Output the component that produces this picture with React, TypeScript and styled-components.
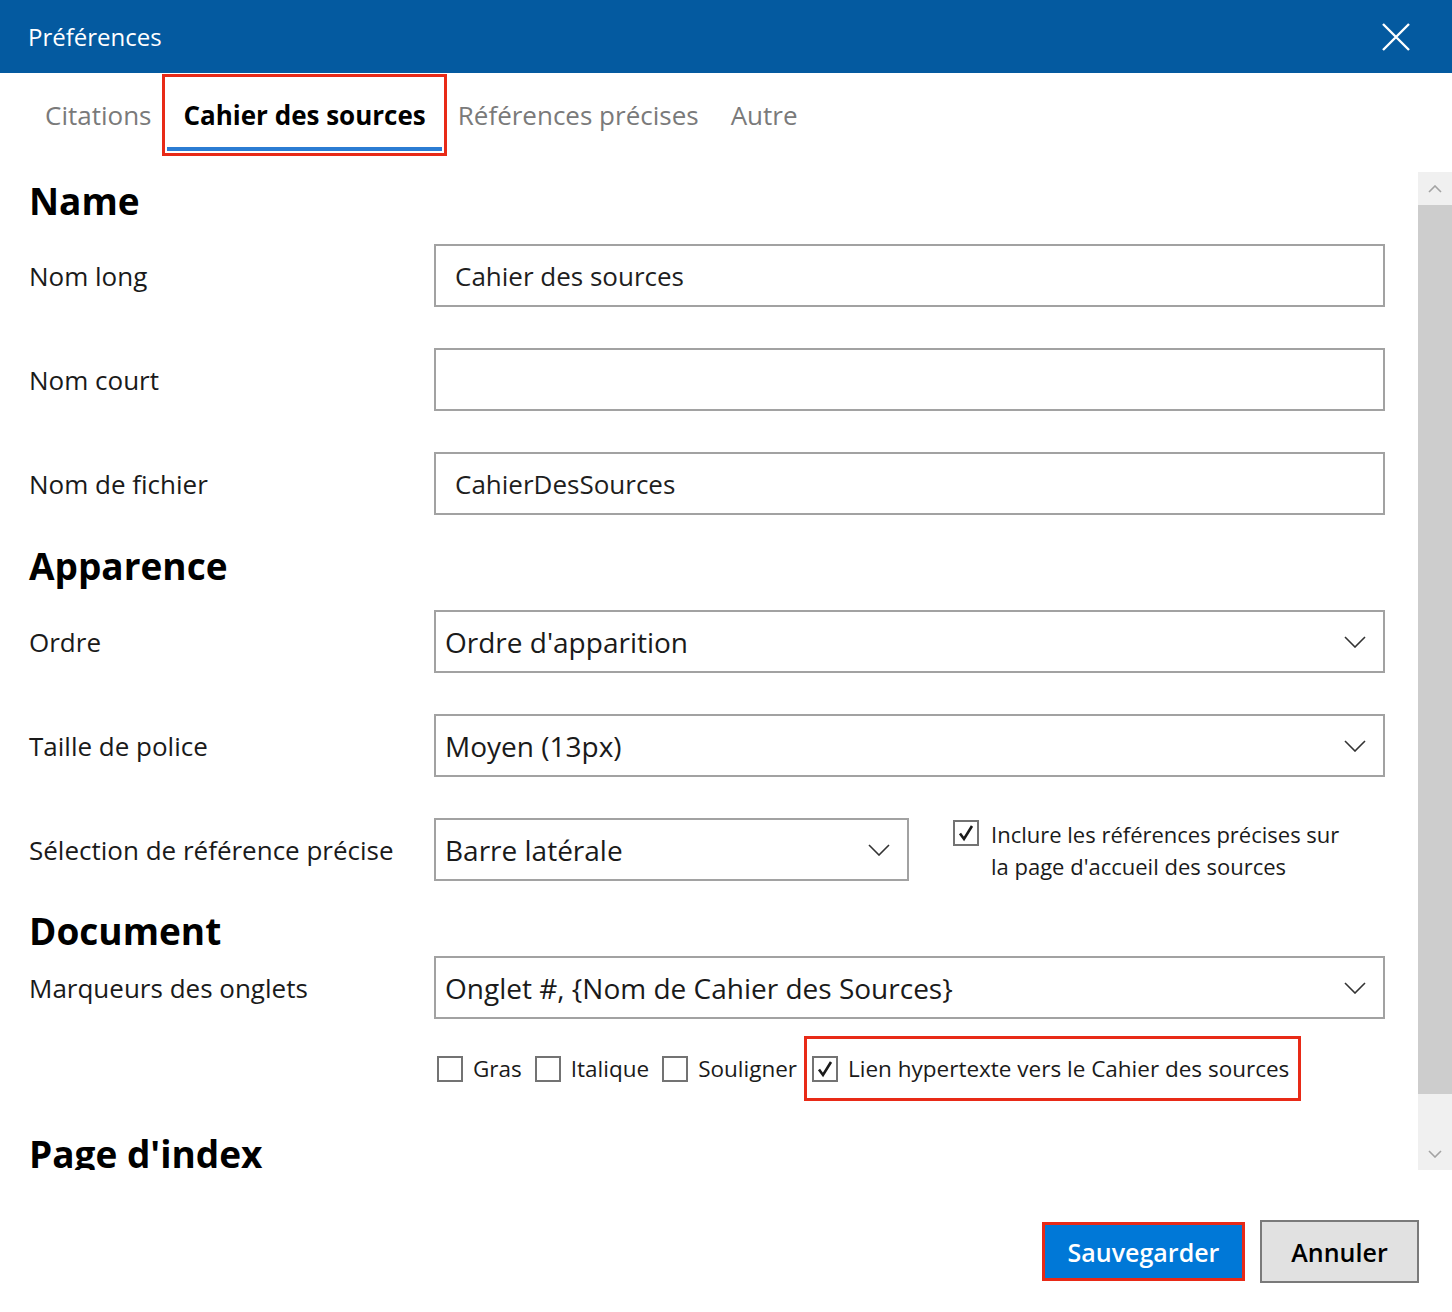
import styled, { createGlobalStyle } from 'styled-components';

const GlobalStyle = createGlobalStyle`
  html, body {
    margin: 0;
    padding: 0;
    background: #fff;
  }
  body {
    font-family: "Segoe UI", "Open Sans", "Noto Sans", sans-serif;
    color: #1b1b1b;
  }
  * {
    box-sizing: border-box;
  }
`;

const MARK = '#e82a17';

const Dialog = styled.div`
  width: 1452px;
  height: 1312px;
  display: flex;
  flex-direction: column;
  background: #fff;
  overflow: hidden;
`;

const TitleBar = styled.header`
  height: 73px;
  flex: none;
  display: flex;
  align-items: center;
  justify-content: space-between;
  padding: 0 42px 0 28px;
  background: #045aa0;
  color: #fff;
`;

const Title = styled.h1`
  margin: 0;
  font-size: 24px;
  font-weight: 400;
`;

const CloseButton = styled.button`
  width: 28px;
  height: 28px;
  padding: 0;
  border: 0;
  background: none;
  display: flex;
`;

const TabBar = styled.nav`
  height: 99px;
  flex: none;
  display: flex;
  align-items: flex-start;
  padding: 6px 0 0 29px;
`;

const Tab = styled.div<{ $active?: boolean; $marked?: boolean }>`
  height: 72px;
  padding: 4px 16px 0;
  display: flex;
  align-items: center;
  font-size: 26px;
  font-weight: ${(p) => (p.$active ? 700 : 400)};
  color: ${(p) => (p.$active ? '#000' : '#7a7a7a')};
  border-bottom: 4px solid ${(p) => (p.$active ? '#2b7cd3' : 'transparent')};
  outline: ${(p) => (p.$marked ? `3px solid ${MARK}` : 'none')};
  outline-offset: 2px;
`;

const ScrollArea = styled.div`
  height: 998px;
  flex: none;
  display: flex;
`;

const Content = styled.div`
  flex: 1;
  overflow: hidden;
  padding: 5px 33px 0 29px;
`;

const Scrollbar = styled.div`
  width: 34px;
  flex: none;
  display: flex;
  flex-direction: column;
  background: #f0f0f0;
`;

const ScrollButton = styled.div`
  height: 33px;
  flex: none;
  display: flex;
  align-items: center;
  justify-content: center;
`;

const ScrollThumb = styled.div`
  height: 889px;
  flex: none;
  background: #cdcdcd;
`;

const ScrollTrack = styled.div`
  flex: 1;
`;

const SectionTitle = styled.h2<{ $top?: number; $bottom?: number }>`
  margin: ${(p) => p.$top ?? 26}px 0 ${(p) => p.$bottom ?? 20}px;
  font-size: 37px;
  line-height: 48px;
  font-weight: 700;
  color: #000;
`;

const Fields = styled.div`
  display: flex;
  flex-direction: column;
  gap: 41px;
`;

const FieldRow = styled.div<{ $align?: string }>`
  display: grid;
  grid-template-columns: 405px 1fr;
  align-items: ${(p) => p.$align ?? 'center'};
`;

const FieldLabel = styled.label<{ $offset?: number }>`
  font-size: 26px;
  color: #1a1a1a;
  padding-top: ${(p) => p.$offset ?? 0}px;
`;

const TextInput = styled.input`
  height: 63px;
  width: 100%;
  border: 2px solid #a2a2a2;
  border-radius: 0;
  padding: 0 19px;
  font-family: inherit;
  font-size: 26px;
  color: #1e1e1e;
  background: #fff;
  outline: none;
`;

const Select = styled.div<{ $width?: number }>`
  height: 63px;
  width: ${(p) => (p.$width ? `${p.$width}px` : '100%')};
  flex: none;
  display: flex;
  align-items: center;
  justify-content: space-between;
  padding: 0 17px 0 9px;
  border: 2px solid #a2a2a2;
  font-size: 28px;
  color: #1a1a1a;
  background: #fff;
`;

const InlineGroup = styled.div`
  display: flex;
  align-items: flex-start;
`;

const SideOption = styled.div`
  margin-left: 44px;
  display: flex;
  align-items: flex-start;
  gap: 12px;
  font-size: 22px;
  line-height: 32px;
  color: #1a1a1a;
`;

const CheckRow = styled.div`
  margin-top: 17px;
  padding-left: 408px;
  display: flex;
  align-items: center;
  gap: 13px;
`;

const CheckItem = styled.label<{ $marked?: boolean }>`
  display: flex;
  align-items: center;
  gap: 10px;
  font-size: 22.5px;
  color: #1a1a1a;
  border: ${(p) => (p.$marked ? `3px solid ${MARK}` : 'none')};
  padding: ${(p) => (p.$marked ? '14px 9px 14px 5px' : '0')};
  margin-left: ${(p) => (p.$marked ? '-6px' : '0')};
`;

const Box = styled.span<{ $top?: number }>`
  width: 26px;
  height: 26px;
  flex: none;
  margin-top: ${(p) => p.$top ?? 0}px;
  border: 2px solid #737373;
  background: #fff;
  display: flex;
  align-items: center;
  justify-content: center;
`;

const Footer = styled.footer`
  flex: 1;
  display: flex;
  justify-content: flex-end;
  align-items: flex-start;
  gap: 15px;
  padding: 50px 33px 0 0;
`;

const SaveButton = styled.button`
  height: 59px;
  width: 203px;
  margin-top: 2px;
  padding: 0;
  border: 3px solid ${MARK};
  background: #0078d7;
  color: #fff;
  font-family: inherit;
  font-size: 25px;
  font-weight: 600;
`;

const CancelButton = styled.button`
  height: 63px;
  width: 159px;
  border: 2px solid #7a7a7a;
  background: #e1e1e1;
  color: #000;
  font-family: inherit;
  font-size: 25px;
  font-weight: 600;
`;

const Chevron = () => (
  <svg width="22" height="12" viewBox="0 0 22 12">
    <path d="M1 1 L11 11 L21 1" fill="none" stroke="#333" strokeWidth="1.6" />
  </svg>
);

const ScrollArrow = ({ up }: { up?: boolean }) => (
  <svg width="14" height="8" viewBox="0 0 14 8">
    <path d={up ? 'M1 7 L7 1 L13 7' : 'M1 1 L7 7 L13 1'} fill="none" stroke="#a3a3a3" strokeWidth="1.6" />
  </svg>
);

const Checkbox = ({ checked, top }: { checked?: boolean; top?: number }) => (
  <Box $top={top}>
    {checked ? (
      <svg width="20" height="20" viewBox="0 0 20 20">
        <path d="M4 10.5 L8 16 L16 3" fill="none" stroke="#1a1a1a" strokeWidth="2.6" />
      </svg>
    ) : null}
  </Box>
);

const tabs = ['Citations', 'Cahier des sources', 'Références précises', 'Autre'];

export default function App() {
  return (
    <Dialog>
      <GlobalStyle />
      <TitleBar>
        <Title>Préférences</Title>
        <CloseButton aria-label="Fermer">
          <svg width="28" height="28" viewBox="0 0 28 28">
            <path d="M1 1 L27 27 M27 1 L1 27" stroke="#fff" strokeWidth="2.4" />
          </svg>
        </CloseButton>
      </TitleBar>

      <TabBar>
        {tabs.map((t) => (
          <Tab key={t} $active={t === 'Cahier des sources'} $marked={t === 'Cahier des sources'}>
            {t}
          </Tab>
        ))}
      </TabBar>

      <ScrollArea>
        <Content>
          <SectionTitle $top={0} $bottom={19}>Name</SectionTitle>
          <Fields>
            <FieldRow>
              <FieldLabel>Nom long</FieldLabel>
              <TextInput readOnly value="Cahier des sources" />
            </FieldRow>
            <FieldRow>
              <FieldLabel>Nom court</FieldLabel>
              <TextInput readOnly value="" />
            </FieldRow>
            <FieldRow>
              <FieldLabel>Nom de fichier</FieldLabel>
              <TextInput readOnly value="CahierDesSources" />
            </FieldRow>
          </Fields>

          <SectionTitle $top={27}>Apparence</SectionTitle>
          <Fields>
            <FieldRow>
              <FieldLabel>Ordre</FieldLabel>
              <Select>
                Ordre d'apparition
                <Chevron />
              </Select>
            </FieldRow>
            <FieldRow>
              <FieldLabel>Taille de police</FieldLabel>
              <Select>
                Moyen (13px)
                <Chevron />
              </Select>
            </FieldRow>
            <FieldRow $align="start">
              <FieldLabel $offset={14}>Sélection de référence précise</FieldLabel>
              <InlineGroup>
                <Select $width={475}>
                  Barre latérale
                  <Chevron />
                </Select>
                <SideOption>
                  <Checkbox checked top={2} />
                  <span>
                    Inclure les références précises sur
                    <br />
                    la page d'accueil des sources
                  </span>
                </SideOption>
              </InlineGroup>
            </FieldRow>
          </Fields>

          <SectionTitle $top={25} $bottom={1}>Document</SectionTitle>
          <FieldRow>
            <FieldLabel>Marqueurs des onglets</FieldLabel>
            <Select>
              Onglet #, {'{'}Nom de Cahier des Sources{'}'}
              <Chevron />
            </Select>
          </FieldRow>
          <CheckRow>
            <CheckItem>
              <Checkbox />
              Gras
            </CheckItem>
            <CheckItem>
              <Checkbox />
              Italique
            </CheckItem>
            <CheckItem>
              <Checkbox />
              Souligner
            </CheckItem>
            <CheckItem $marked>
              <Checkbox checked />
              Lien hypertexte vers le Cahier des sources
            </CheckItem>
          </CheckRow>

          <SectionTitle $top={29}>Page d'index</SectionTitle>
        </Content>
        <Scrollbar>
          <ScrollButton>
            <ScrollArrow up />
          </ScrollButton>
          <ScrollThumb />
          <ScrollTrack />
          <ScrollButton>
            <ScrollArrow />
          </ScrollButton>
        </Scrollbar>
      </ScrollArea>

      <Footer>
        <SaveButton>Sauvegarder</SaveButton>
        <CancelButton>Annuler</CancelButton>
      </Footer>
    </Dialog>
  );
}
